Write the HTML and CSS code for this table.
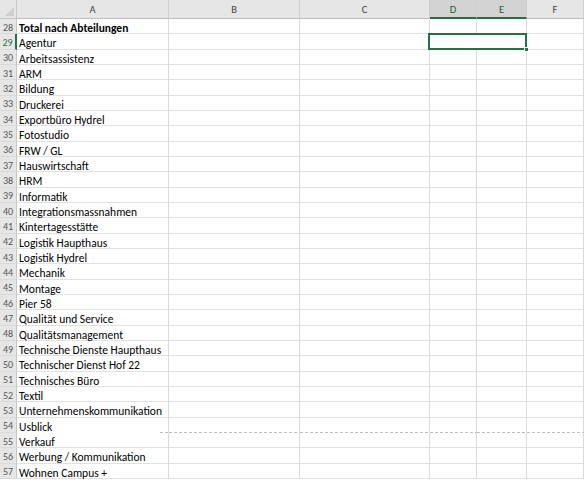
FILE: index.html
```html
<!DOCTYPE html>
<html lang="de">
<head>
<meta charset="utf-8">
<title>Tabelle</title>
<link rel="stylesheet" href="styles.css">
</head>
<body>
<div class="sheet">
  <div class="corner"><span class="tri"></span></div>
  <div class="ch">A</div>
  <div class="ch">B</div>
  <div class="ch">C</div>
  <div class="ch chsel">D</div>
  <div class="ch chsel">E</div>
  <div class="ch">F</div>

  <div class="rh">28</div><div class="c ca bold">Total nach Abteilungen</div><div class="c"></div><div class="c"></div><div class="c"></div><div class="c"></div><div class="c"></div>
  <div class="rh rhsel">29</div><div class="c ca">Agentur</div><div class="c"></div><div class="c"></div><div class="c sel"><span class="handle"></span></div><div class="c"></div>
  <div class="rh">30</div><div class="c ca">Arbeitsassistenz</div><div class="c"></div><div class="c"></div><div class="c"></div><div class="c"></div><div class="c"></div>
  <div class="rh">31</div><div class="c ca">ARM</div><div class="c"></div><div class="c"></div><div class="c"></div><div class="c"></div><div class="c"></div>
  <div class="rh">32</div><div class="c ca">Bildung</div><div class="c"></div><div class="c"></div><div class="c"></div><div class="c"></div><div class="c"></div>
  <div class="rh">33</div><div class="c ca">Druckerei</div><div class="c"></div><div class="c"></div><div class="c"></div><div class="c"></div><div class="c"></div>
  <div class="rh">34</div><div class="c ca">Exportbüro Hydrel</div><div class="c"></div><div class="c"></div><div class="c"></div><div class="c"></div><div class="c"></div>
  <div class="rh">35</div><div class="c ca">Fotostudio</div><div class="c"></div><div class="c"></div><div class="c"></div><div class="c"></div><div class="c"></div>
  <div class="rh">36</div><div class="c ca">FRW / GL</div><div class="c"></div><div class="c"></div><div class="c"></div><div class="c"></div><div class="c"></div>
  <div class="rh">37</div><div class="c ca">Hauswirtschaft</div><div class="c"></div><div class="c"></div><div class="c"></div><div class="c"></div><div class="c"></div>
  <div class="rh">38</div><div class="c ca">HRM</div><div class="c"></div><div class="c"></div><div class="c"></div><div class="c"></div><div class="c"></div>
  <div class="rh">39</div><div class="c ca">Informatik</div><div class="c"></div><div class="c"></div><div class="c"></div><div class="c"></div><div class="c"></div>
  <div class="rh">40</div><div class="c ca">Integrationsmassnahmen</div><div class="c"></div><div class="c"></div><div class="c"></div><div class="c"></div><div class="c"></div>
  <div class="rh">41</div><div class="c ca">Kintertagesstätte</div><div class="c"></div><div class="c"></div><div class="c"></div><div class="c"></div><div class="c"></div>
  <div class="rh">42</div><div class="c ca">Logistik Haupthaus</div><div class="c"></div><div class="c"></div><div class="c"></div><div class="c"></div><div class="c"></div>
  <div class="rh">43</div><div class="c ca">Logistik Hydrel</div><div class="c"></div><div class="c"></div><div class="c"></div><div class="c"></div><div class="c"></div>
  <div class="rh">44</div><div class="c ca">Mechanik</div><div class="c"></div><div class="c"></div><div class="c"></div><div class="c"></div><div class="c"></div>
  <div class="rh">45</div><div class="c ca">Montage</div><div class="c"></div><div class="c"></div><div class="c"></div><div class="c"></div><div class="c"></div>
  <div class="rh">46</div><div class="c ca">Pier 58</div><div class="c"></div><div class="c"></div><div class="c"></div><div class="c"></div><div class="c"></div>
  <div class="rh">47</div><div class="c ca">Qualität und Service</div><div class="c"></div><div class="c"></div><div class="c"></div><div class="c"></div><div class="c"></div>
  <div class="rh">48</div><div class="c ca">Qualitätsmanagement</div><div class="c"></div><div class="c"></div><div class="c"></div><div class="c"></div><div class="c"></div>
  <div class="rh">49</div><div class="c ca">Technische Dienste Haupthaus</div><div class="c"></div><div class="c"></div><div class="c"></div><div class="c"></div><div class="c"></div>
  <div class="rh">50</div><div class="c ca">Technischer Dienst Hof 22</div><div class="c"></div><div class="c"></div><div class="c"></div><div class="c"></div><div class="c"></div>
  <div class="rh">51</div><div class="c ca">Technisches Büro</div><div class="c"></div><div class="c"></div><div class="c"></div><div class="c"></div><div class="c"></div>
  <div class="rh">52</div><div class="c ca">Textil</div><div class="c"></div><div class="c"></div><div class="c"></div><div class="c"></div><div class="c"></div>
  <div class="rh">53</div><div class="c ca">Unternehmenskommunikation</div><div class="c"></div><div class="c"></div><div class="c"></div><div class="c"></div><div class="c"></div>
  <div class="rh">54</div><div class="c ca brk">Usblick</div><div class="c brk"></div><div class="c brk"></div><div class="c brk"></div><div class="c brk"></div><div class="c brk"></div>
  <div class="rh">55</div><div class="c ca">Verkauf</div><div class="c"></div><div class="c"></div><div class="c"></div><div class="c"></div><div class="c"></div>
  <div class="rh">56</div><div class="c ca">Werbung / Kommunikation</div><div class="c"></div><div class="c"></div><div class="c"></div><div class="c"></div><div class="c"></div>
  <div class="rh">57</div><div class="c ca">Wohnen Campus +</div><div class="c"></div><div class="c"></div><div class="c"></div><div class="c"></div><div class="c"></div>
</div>
</body>
</html>
```

FILE: styles.css
```css
html, body {
  margin: 0;
  padding: 0;
  background: #ffffff;
  overflow: hidden;
}

.sheet {
  display: grid;
  grid-template-columns: 17px 152px 131px 130px 47px 50px 1fr;
  grid-template-rows: 19px;
  grid-auto-rows: 15.333px;
  width: 584px;
  height: 480px;
  overflow: hidden;
  font-family: Carlito, Calibri, "Liberation Sans", sans-serif;
  font-size: 11.5px;
  color: #000;
}

.corner {
  position: relative;
  background: #e6e6e6;
  border-right: 1px solid #c6c6c6;
  border-bottom: 1px solid #c6c6c6;
  box-sizing: border-box;
}

.tri {
  position: absolute;
  right: 2px;
  bottom: 2px;
  width: 0;
  height: 0;
  border-left: 9px solid transparent;
  border-bottom: 9px solid #cfcfcf;
}

.ch {
  background: #e6e6e6;
  border-right: 1px solid #cfcfcf;
  border-bottom: 1px solid #bdbdbd;
  box-sizing: border-box;
  display: flex;
  align-items: center;
  justify-content: center;
  font-size: 10.5px;
  color: #444;
  padding-top: 1px;
}

.chsel {
  background: #d3d3d3;
  border-bottom: 2px solid #217346;
  color: #1d5c3a;
  padding-top: 2px;
}

.rh {
  background: #e6e6e6;
  border-right: 1px solid #c6c6c6;
  border-bottom: 1px solid #dadada;
  box-sizing: border-box;
  display: flex;
  align-items: center;
  justify-content: center;
  font-size: 10px;
  color: #555;
  padding-top: 2px;
}

.rhsel {
  color: #217346;
  border-right: 2px solid #217346;
}

.c {
  border-right: 1px solid #dadada;
  border-bottom: 1px solid #e1e1e1;
  box-sizing: border-box;
  white-space: nowrap;
  line-height: 15px;
  padding-top: 2px;
  overflow: visible;
}

.ca {
  padding-left: 2px;
}

.bold {
  font-weight: bold;
}

.sel {
  grid-column: span 2;
  position: relative;
}

.sel::after {
  content: "";
  position: absolute;
  left: -2px;
  top: -1px;
  right: -1px;
  bottom: -1px;
  border: 2px solid #217346;
}

.handle {
  position: absolute;
  right: -3px;
  bottom: -3px;
  width: 5px;
  height: 5px;
  background: #217346;
  border: 1px solid #fff;
  box-sizing: border-box;
  z-index: 1;
}

.brk {
  border-bottom-color: transparent;
  background-image: repeating-linear-gradient(to right, #bdbdbd 0 3px, transparent 3px 5px);
  background-size: 100% 1px;
  background-position: left bottom;
  background-repeat: no-repeat;
  background-origin: border-box;
}

.ca.brk {
  background-size: 9px 1px;
  background-position: right bottom;
}
```
